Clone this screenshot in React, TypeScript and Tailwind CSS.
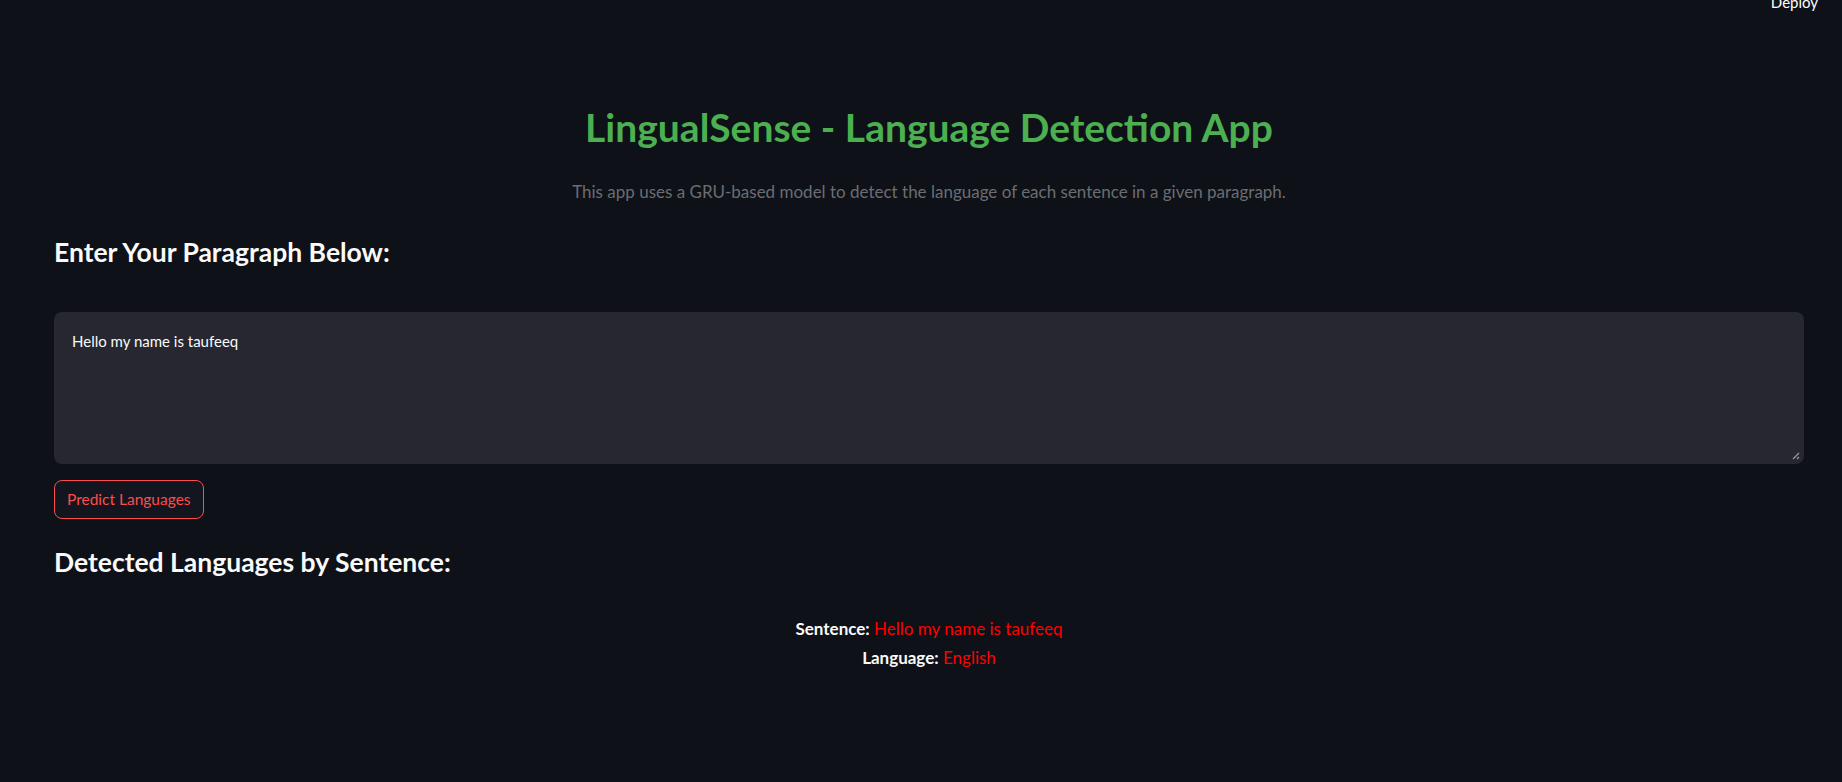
import React from "react";

export default function App() {
  return (
    <div
      className="relative min-h-screen w-full bg-[#0e1117] text-white"
      style={{ fontFamily: "Lato, 'Noto Sans', sans-serif" }}
    >
      <div className="absolute right-[24px] top-[-9px] text-[15px] text-white">Deploy</div>
      <div className="flex flex-col pl-[54px] pr-[38px] pt-[101px]">
        <h1 className="text-center text-[39px] font-bold leading-[52px] text-[#4caf50]">
          LingualSense - Language Detection App
        </h1>
        <p className="mt-[26px] text-center text-[17px] leading-[26px] text-[#6b6d72]">
          This app uses a GRU-based model to detect the language of each sentence in a given paragraph.
        </p>
        <h3 className="mt-[29px] text-[26.5px] font-bold leading-[36px] text-[#fafafa]">
          Enter Your Paragraph Below:
        </h3>
        <div className="relative mt-[42px] h-[152px] rounded-[8px] bg-[#262730] px-[18px] pb-[20px] pt-[18px]">
          <div className="text-[15px] leading-[22px] text-[#fafafa]">Hello my name is taufeeq</div>
          <svg className="absolute bottom-[4px] right-[4px]" width="8" height="8" viewBox="0 0 8 8">
            <path d="M7 1L1 7M7 5L5 7" stroke="#9a9aa0" strokeWidth="1.2" />
          </svg>
        </div>
        <div className="mt-[16px] flex">
          <button className="h-[39px] rounded-[8px] border border-[#ff4b4b] bg-[#13161e] px-[12px] text-[15.5px] text-[#ff4b4b]">
            Predict Languages
          </button>
        </div>
        <h3 className="mt-[25px] text-[26.5px] font-bold leading-[36px] text-[#fafafa]">
          Detected Languages by Sentence:
        </h3>
        <div className="mt-[34px] flex flex-col items-center text-[17px] leading-[29px]">
          <div>
            <span className="font-bold text-[#fafafa]">Sentence:</span>{" "}
            <span className="text-[#ff0000]">Hello my name is taufeeq</span>
          </div>
          <div>
            <span className="font-bold text-[#fafafa]">Language:</span>{" "}
            <span className="text-[#ff0000]">English</span>
          </div>
        </div>
      </div>
    </div>
  );
}
